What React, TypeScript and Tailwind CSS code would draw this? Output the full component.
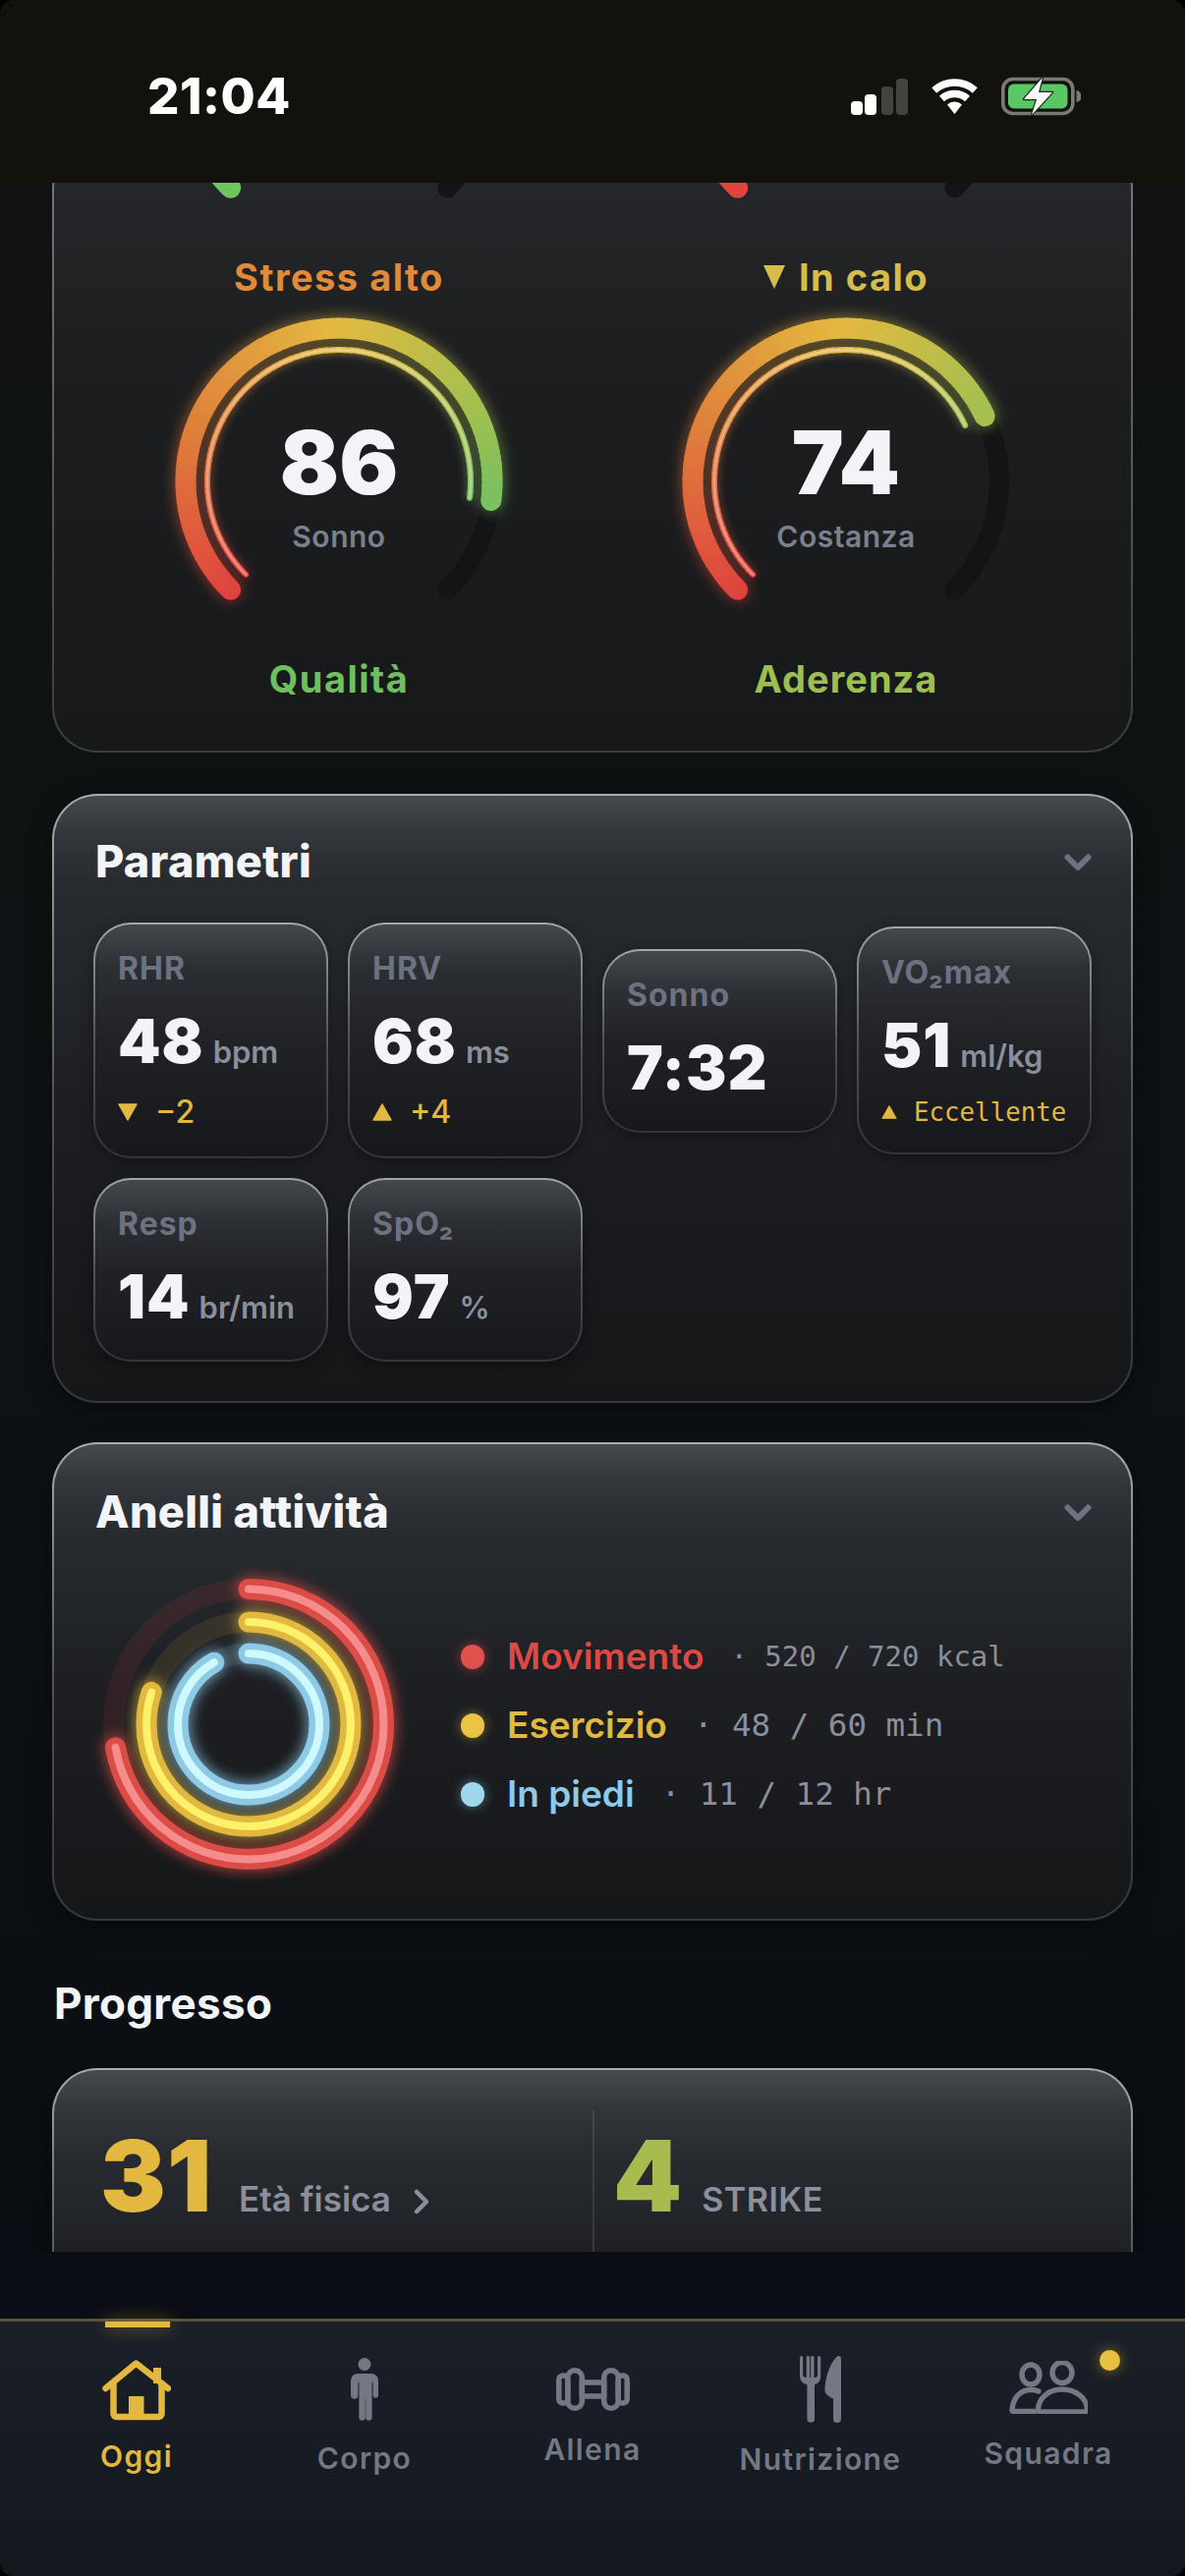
import type { ReactNode } from 'react';

const SANS = "font-['Inter','Noto_Sans',sans-serif]";
const MONO = "font-['DejaVu_Sans_Mono','Liberation_Mono',monospace]";

// colour along the gauge, position 0..1 of the full 270 degree sweep
const GAUGE_STOPS: [number, number[]][] = [
    [0, [224, 66, 62]],
    [0.25, [223, 128, 59]],
    [0.5, [227, 185, 64]],
    [0.74, [162, 192, 80]],
    [0.86, [122, 192, 96]],
    [1, [110, 190, 100]],
];

function gaugeColor(t: number, lighten = 0) {
    for (let i = 1; i < GAUGE_STOPS.length; i++) {
        const [p0, c0] = GAUGE_STOPS[i - 1];
        const [p1, c1] = GAUGE_STOPS[i];
        if (t <= p1) {
            const k = (t - p0) / (p1 - p0);
            const mix = c0.map((v, j) => v + (c1[j] - v) * k).map((v) => Math.round(v + (255 - v) * lighten));
            return `rgb(${mix.join(',')})`;
        }
    }
    return 'rgb(110,190,100)';
}

function polar(cx: number, cy: number, r: number, deg: number) {
    const a = ((deg - 90) * Math.PI) / 180;
    return [cx + r * Math.cos(a), cy + r * Math.sin(a)];
}

function arc(cx: number, cy: number, r: number, from: number, to: number) {
    const [x0, y0] = polar(cx, cy, r, from);
    const [x1, y1] = polar(cx, cy, r, to);
    return `M${x0} ${y0}A${r} ${r} 0 ${to - from > 180 ? 1 : 0} 1 ${x1} ${y1}`;
}

function GradientArc({ cx, cy, r, value, width, lighten = 0 }: { cx: number; cy: number; r: number; value: number; width: number; lighten?: number }) {
    const n = Math.round(value * 100);
    return (
        <>
            {Array.from({ length: n }, (_, i) => {
                const from = -135 + (270 * value * i) / n;
                const to = -135 + (270 * value * (i + 1)) / n;
                return <path key={i} d={arc(cx, cy, r, from, to)} fill="none" stroke={gaugeColor((i / n) * value, lighten)} strokeWidth={width} strokeLinecap="round" />;
            })}
        </>
    );
}

function Gauge({ value, title, caption }: { value: number; title: string; caption: string }) {
    const t = value / 100;
    return (
        <div className="relative w-full">
            <svg width="516" height="320" viewBox="0 0 516 320" className="block overflow-visible">
                <path d={arc(258, 186, 156, -135, 135)} fill="none" stroke="#131415" strokeWidth="20" strokeLinecap="round" />
                <g className="blur-[7px] opacity-50">
                    <GradientArc cx={258} cy={186} r={156} value={t} width={24} />
                </g>
                <g className="blur-[5px] opacity-60">
                    <GradientArc cx={258} cy={186} r={134} value={t} width={6} />
                </g>
                <GradientArc cx={258} cy={186} r={156} value={t} width={21} />
                <GradientArc cx={258} cy={186} r={134} value={t} width={6} />
                <GradientArc cx={258} cy={186} r={134} value={t} width={3} lighten={0.35} />
            </svg>
            <div className="absolute left-0 right-0 top-[122px] flex flex-col items-center">
                <span className="text-[89px] leading-[90px] font-black text-[#f2f4f7]">{title}</span>
                <span className="mt-[15px] text-[30px] leading-[30px] font-semibold tracking-[0.5px] text-[#7b808e]">{caption}</span>
            </div>
        </div>
    );
}

// ends of the gauges scrolled up under the status bar
function GaugeTail({ color }: { color: string }) {
    return (
        <svg width="516" height="58" viewBox="0 0 516 58" className="block">
            <path d={arc(258, -67, 156, -135, -118)} fill="none" stroke={color} strokeWidth="21" strokeLinecap="round" />
            <path d={arc(258, -67, 156, 118, 135)} fill="none" stroke="#131415" strokeWidth="20" strokeLinecap="round" />
        </svg>
    );
}

function Card({ children, className = '' }: { children: ReactNode; className?: string }) {
    return (
        <div className={`rounded-[46px] bg-gradient-to-b from-[#a9acaf] via-[#505356] to-[#35383a] p-[2px] shadow-[0_6px_24px_rgba(0,0,0,0.45)] ${className}`}>
            <div className="h-full rounded-[44px] bg-[linear-gradient(180deg,#46494d_0px,#33363b_36px,#272b30_90px,#1d1f23_50%,#141618_100%)]">{children}</div>
        </div>
    );
}

function CardHeader({ title }: { title: string }) {
    return (
        <div className="flex h-[52px] items-center justify-between pl-[42px] pr-[40px]">
            <h2 className="text-[45px] leading-[52px] font-extrabold tracking-[0.3px] text-[#f2f4f7]">{title}</h2>
            <svg width="28" height="19" viewBox="0 0 28 19" fill="none" stroke="#6b7280" strokeWidth="6" strokeLinecap="round" strokeLinejoin="round">
                <path d="M3.500 4.500 14 15 24.500 4.500" />
            </svg>
        </div>
    );
}

function Triangle({ down, size = 20 }: { down?: boolean; size?: number }) {
    return (
        <svg width={size} height={size - 2} viewBox="0 0 20 18" className="shrink-0" fill="#e2b83f" stroke="#e2b83f" strokeWidth="1.5" strokeLinejoin="round">
            <path d={down ? 'M1 1h18L10 17z' : 'M10 1 19 17H1z'} />
        </svg>
    );
}

type Metric = {
    label: string;
    value: string;
    unit?: string;
    delta?: string;
    down?: boolean;
    note?: string;
};

function MetricCard({ label, value, unit, delta, down, note }: Metric) {
    return (
        <div className="rounded-[38px] bg-gradient-to-b from-[#a3a6a9] via-[#505356] to-[#323538] p-[2px] shadow-[0_4px_14px_rgba(0,0,0,0.35)]">
            <div className="rounded-[36px] bg-[linear-gradient(180deg,#44474b_0px,#2b2e33_44px,#202226_50%,#17181b_100%)] pl-[23px] pt-[27px] pb-[32px]">
                <div className="h-[36px] text-[32px] leading-[36px] font-bold tracking-[1px] text-[#6d7280]">{label}</div>
                <div className="mt-[24px] flex h-[64px] items-baseline gap-[9px]">
                    <span className="text-[62px] leading-[64px] font-black tracking-[1px] text-[#f2f4f7]">{value}</span>
                    {unit && <span className="text-[31px] leading-[30px] font-semibold text-[#8a8f9c]">{unit}</span>}
                </div>
                {delta && (
                    <div className="mt-[27px] flex h-[26px] items-center gap-[18px] text-[32px] leading-[26px] font-medium text-[#e2b83f]">
                        <Triangle down={down} />
                        <span>{delta}</span>
                    </div>
                )}
                {note && (
                    <div className={`mt-[27px] flex h-[18px] items-center gap-[17px] text-[25.8px] leading-[18px] text-[#e2b83f] ${MONO}`}>
                        <Triangle size={16} />
                        <span>{note}</span>
                    </div>
                )}
            </div>
        </div>
    );
}

function Rings() {
    const rings = [
        { r: 137.5, pct: 0.722, base: '#dc4c47', core: '#f48d8b', track: '#e0423f' },
        { r: 104, pct: 0.8, base: '#e2b83f', core: '#fff16a', track: '#e2b83f' },
        { r: 72, pct: 0.917, base: '#8ecae6', core: '#cdf9ff', track: '#8ecae6' },
    ];
    return (
        <svg width="340" height="340" viewBox="0 0 340 340" className="shrink-0 overflow-visible">
            <g transform="rotate(-90 170 170)" fill="none" strokeLinecap="round">
                {rings.map((o) => {
                    const len = 2 * Math.PI * o.r;
                    const dash = `${len * o.pct} ${len}`;
                    return (
                        <g key={o.r}>
                            <circle cx="170" cy="170" r={o.r} stroke={o.track} strokeOpacity="0.11" strokeWidth="21" />
                            <circle className="blur-[7px] opacity-70" cx="170" cy="170" r={o.r} stroke={o.base} strokeWidth="25" strokeDasharray={dash} />
                            <circle cx="170" cy="170" r={o.r} stroke={o.base} strokeWidth="21" strokeDasharray={dash} />
                            <circle cx="170" cy="170" r={o.r} stroke={o.core} strokeWidth="8" strokeDasharray={dash} />
                        </g>
                    );
                })}
            </g>
        </svg>
    );
}

function LegendRow({ name, stat, dot, text, glow, statSize }: { name: string; stat: string; dot: string; text: string; glow: string; statSize: string }) {
    return (
        <div className="flex h-[70px] items-center">
            <span className={`h-[25px] w-[24px] rounded-full ${dot} ${glow}`} />
            <span className={`ml-[23px] text-[37px] leading-[44px] font-semibold ${text}`}>{name}</span>
            <span className={`ml-[27px] ${statSize} leading-[36px] whitespace-pre text-[#8b8f9b] ${MONO}`}>{`· ${stat}`}</span>
        </div>
    );
}

function HomeIcon() {
    return (
        <svg width="70" height="62" viewBox="0 0 70 62" fill="none" stroke="#e2b83f" strokeWidth="6.500" strokeLinecap="round" strokeLinejoin="round">
            <path d="M3.500 29 34.500 3.500 67 29" />
            <path d="M11.500 24v31a3 3 0 0 0 3 3h43a3 3 0 0 0 3-3V24" />
            <path d="M52 8h8v16h-8z" fill="#e2b83f" strokeWidth="0" />
            <path d="M27 37h15.500v20H27z" fill="#e2b83f" strokeWidth="0" />
        </svg>
    );
}

function BodyIcon() {
    return (
        <svg width="28" height="64" viewBox="0 0 28 64" fill="#737883">
            <circle cx="14" cy="6.500" r="6.500" />
            <path d="M7 16h14a7 7 0 0 1 7 7v15a2.700 2.700 0 0 1-5.400 0V25h-1v35.500a3.200 3.200 0 0 1-6.400 0V42h-.4v18.500a3.200 3.200 0 0 1-6.400 0V25h-1v13A2.700 2.700 0 0 1 0 38V23a7 7 0 0 1 7-7z" />
        </svg>
    );
}

function DumbbellIcon() {
    return (
        <svg width="75" height="44" viewBox="0 0 75 44" fill="none" stroke="#737883" strokeWidth="5.500" strokeLinejoin="round">
            <rect x="2.800" y="8" width="9" height="28" rx="4" />
            <rect x="11.800" y="2.800" width="14.500" height="38.400" rx="7" />
            <rect x="26.300" y="15" width="22.400" height="14" />
            <rect x="48.700" y="2.800" width="14.500" height="38.400" rx="7" />
            <rect x="63.200" y="8" width="9" height="28" rx="4" />
        </svg>
    );
}

function CutleryIcon() {
    return (
        <svg width="42" height="68" viewBox="0 0 42 68" fill="#737883">
            <path d="M1.600 0a1.600 1.600 0 0 1 1.600 1.600V19a3 3 0 0 0 3 3h.5V1.600a1.600 1.600 0 0 1 3.400 0V22h1V1.600a1.600 1.600 0 0 1 3.400 0V22h.5a3 3 0 0 0 3-3V1.600a1.600 1.600 0 0 1 3.200 0V21a8.500 8.500 0 0 1-6.200 8.200V64a3.800 3.800 0 0 1-7.600 0V29.200A8.500 8.500 0 0 1 0 21V1.600A1.600 1.600 0 0 1 1.600 0z" />
            <path d="M39.500 0A2.500 2.500 0 0 1 42 2.500V64a4 4 0 0 1-8 0V43.500c-4-2-8.500-4.500-8.500-8.500C25.500 22 31 7 37.500 1a3 3 0 0 1 2-1z" />
        </svg>
    );
}

function PeopleIcon() {
    return (
        <svg width="80" height="54" viewBox="0 0 80 54" fill="none" stroke="#737883" strokeWidth="5.400" strokeLinecap="round" strokeLinejoin="round">
            <ellipse cx="22" cy="14" rx="9" ry="10" />
            <ellipse cx="54" cy="12" rx="10" ry="10.500" />
            <path d="M30 31c-2-1-5-1.500-8-1.500-10 0-18 7.500-19 20 0 1 .5 2 2 2h21" />
            <path d="M54 29c-14 0-24 9-24.500 20.500 0 1.500 1 2.500 2.500 2.500h45c1.500 0 2.500-1 2.500-2.500C79 38 68 29 54 29z" />
        </svg>
    );
}

function SignalIcon() {
    return (
        <svg width="58" height="37" viewBox="0 0 58 37">
            <rect x="0" y="23" width="12" height="14" rx="4" fill="#fff" />
            <rect x="14" y="16" width="12" height="21" rx="4" fill="#fff" />
            <rect x="31" y="8" width="12" height="29" rx="4" fill="#42423f" />
            <rect x="46" y="0" width="12" height="37" rx="4" fill="#42423f" />
        </svg>
    );
}

function WifiIcon() {
    return (
        <svg width="51" height="38" viewBox="0 0 51 38" fill="none" stroke="#fff" strokeWidth="7.500">
            <path d={arc(25.5, 36, 31, -42, 42)} />
            <path d={arc(25.5, 36, 19.5, -42, 42)} />
            <path d="M25.500 37 18 27.500a11 11 0 0 1 15 0z" fill="#fff" stroke="none" />
        </svg>
    );
}

function BatteryIcon() {
    return (
        <svg width="81" height="40" viewBox="0 0 81 40">
            <rect x="1.800" y="2.500" width="71" height="35" rx="10" fill="none" stroke="#777a77" strokeWidth="3.600" />
            <rect x="7" y="7.500" width="60.500" height="25" rx="6" fill="#5ac764" />
            <path d="M76.500 14a5 6 0 0 1 0 12z" fill="#777a77" />
            <path d="M42 1 23 23h13l-5 16 21-23H38z" fill="#fff" stroke="#1b2a1a" strokeWidth="2.500" strokeLinejoin="round" paintOrder="stroke" />
        </svg>
    );
}

const NAV = [
    { label: 'Oggi', icon: <HomeIcon />, box: 'mt-[39px]', gap: 'mt-[18px]', active: true },
    { label: 'Corpo', icon: <BodyIcon />, box: 'mt-[37px]', gap: 'mt-[20px]' },
    { label: 'Allena', icon: <DumbbellIcon />, box: 'mt-[47px]', gap: 'mt-[21px]' },
    { label: 'Nutrizione', icon: <CutleryIcon />, box: 'mt-[35px]', gap: 'mt-[19px]' },
    { label: 'Squadra', icon: <PeopleIcon />, box: 'mt-[40px]', gap: 'mt-[22px]', dot: true },
];

const METRICS: Metric[] = [
    { label: 'RHR', value: '48', unit: 'bpm', delta: '−2', down: true },
    { label: 'HRV', value: '68', unit: 'ms', delta: '+4' },
    { label: 'Sonno', value: '7:32' },
    { label: 'VO₂max', value: '51', unit: 'ml/kg', note: 'Eccellente' },
    { label: 'Resp', value: '14', unit: 'br/min' },
    { label: 'SpO₂', value: '97', unit: '%' },
];

export default function App() {
    return (
        <div className="h-[2622px] w-[1206px] bg-black">
            <div className={`flex h-full w-full flex-col overflow-hidden rounded-[14px] bg-gradient-to-b from-[#101211] via-[#0e1215] to-[#090d14] ${SANS}`}>
                {/* status bar */}
                <div className="relative z-10 flex h-[186px] shrink-0 items-center justify-between bg-[#12110c] pl-[150px] pr-[106px] pt-[10px]">
                    <span className="text-[51px] leading-[60px] font-extrabold tracking-[0.5px] text-white">21:04</span>
                    <div className="flex items-center gap-[22px]">
                        <SignalIcon />
                        <WifiIcon />
                        <BatteryIcon />
                    </div>
                </div>

                <main className="h-[2106px] shrink-0 overflow-hidden px-[53px]">
                    {/* recupero */}
                    <div className="-mt-[40px] rounded-[46px] bg-gradient-to-b from-[#77797b] to-[#3a3d3f] p-[2px]">
                        <div className="rounded-[44px] bg-[linear-gradient(180deg,#26292c_0px,#1d1e20_35%,#16181a_100%)] px-[32px] pb-[51px]">
                            <div className="grid grid-cols-2">
                                <GaugeTail color="#6fc460" />
                                <GaugeTail color="#e0443f" />
                            </div>
                            <div className="mt-[54px] grid grid-cols-2">
                                <div className="flex flex-col items-center">
                                    <div className="flex h-[44px] items-center text-[38px] font-bold tracking-[1.5px] text-[#e08a3a]">Stress alto</div>
                                    <Gauge value={86} title="86" caption="Sonno" />
                                    <div className="mt-[45px] h-[44px] text-[38px] leading-[44px] font-bold tracking-[1.5px] text-[#6fbf5f]">Qualità</div>
                                </div>
                                <div className="flex flex-col items-center">
                                    <div className="flex h-[44px] items-center gap-[14px] text-[38px] font-bold tracking-[1.5px] text-[#d5bd4a]">
                                        <svg width="22" height="24" viewBox="0 0 22 24" fill="#d5bd4a">
                                            <path d="M0 0h22L11 24z" />
                                        </svg>
                                        In calo
                                    </div>
                                    <Gauge value={74} title="74" caption="Costanza" />
                                    <div className="mt-[45px] h-[44px] text-[38px] leading-[44px] font-bold tracking-[1px] text-[#9dbf52]">Aderenza</div>
                                </div>
                            </div>
                        </div>
                    </div>

                    <Card className="mt-[42px]">
                        <div className="pt-[41px] pb-[40px]">
                            <CardHeader title="Parametri" />
                            <div className="mt-[36px] grid grid-cols-4 items-center gap-x-[20px] gap-y-[20px] px-[40px]">
                                {METRICS.map((m) => (
                                    <MetricCard key={m.label} {...m} />
                                ))}
                            </div>
                        </div>
                    </Card>

                    <Card className="mt-[40px]">
                        <div className="pt-[43px] pb-[28px]">
                            <CardHeader title="Anelli attività" />
                            <div className="mt-[20px] flex items-center pl-[28px]">
                                <Rings />
                                <div className="ml-[46px] mt-[2px] flex flex-col">
                                    <LegendRow name="Movimento" stat="520 / 720 kcal" statSize="text-[29px]" dot="bg-[#e0504c]" text="text-[#dd4a45]" glow="shadow-[0_0_12px_rgba(224,70,66,0.6)]" />
                                    <LegendRow name="Esercizio" stat="48 / 60 min" statSize="text-[32.5px]" dot="bg-[#e9c445]" text="text-[#e2b83f]" glow="shadow-[0_0_12px_rgba(226,184,63,0.5)]" />
                                    <LegendRow name="In piedi" stat="11 / 12 hr" statSize="text-[32.5px]" dot="bg-[#9fd8ee]" text="text-[#8ecae6]" glow="shadow-[0_0_12px_rgba(142,202,230,0.5)]" />
                                </div>
                            </div>
                        </div>
                    </Card>

                    <h2 className="mt-[59px] pl-[2px] text-[44px] leading-[50px] font-bold tracking-[0.3px] text-[#f2f4f7]">Progresso</h2>

                    <Card className="mt-[41px] h-[400px]">
                        <div className="grid grid-cols-2 pt-[41px]">
                            <div className="flex h-[120px] items-baseline pl-[47px] pt-[17px]">
                                <span className="text-[100px] leading-[100px] font-black tracking-[1px] text-[#e2b83f]">31</span>
                                <span className="ml-[27px] text-[35px] font-semibold text-[#8a8f9b]">Età fisica</span>
                                <svg width="18" height="26" viewBox="0 0 18 26" fill="none" stroke="#8a8f9b" strokeWidth="4.500" strokeLinecap="round" strokeLinejoin="round" className="ml-[22px] translate-y-[3px]">
                                    <path d="M4 3l10 10L4 23" />
                                </svg>
                            </div>
                            <div className="flex h-[400px] items-baseline border-l-2 border-white/10 pl-[19px] pt-[17px]">
                                <span className="text-[100px] leading-[100px] font-black text-[#a8bb4e]">4</span>
                                <span className="ml-[20px] text-[34px] font-semibold tracking-[0.5px] text-[#8a8f9b]">STRIKE</span>
                            </div>
                        </div>
                    </Card>
                </main>

                <div className="h-[68px] shrink-0 bg-[#0a0d14]" />

                {/* tab bar */}
                <nav className="grid flex-1 grid-cols-5 border-t-[3px] border-[#5a5232] bg-gradient-to-b from-[#1b1f27] to-[#13171e] px-[23px]">
                    {NAV.map((item) => (
                        <div key={item.label} className="relative flex flex-col items-center">
                            {item.active && <span className="absolute left-[84px] top-0 h-[6px] w-[66px] bg-[#e2b83f] shadow-[0_0_18px_rgba(226,184,63,0.55)]" />}
                            {item.dot && <span className="absolute left-[168px] top-[29px] h-[21px] w-[21px] rounded-full bg-[#e9bf3f] shadow-[0_0_14px_rgba(233,191,63,0.5)]" />}
                            <div className={item.box}>{item.icon}</div>
                            <span className={`${item.gap} text-[30px] leading-[36px] font-semibold tracking-[1.4px] ${item.active ? 'text-[#e2b83f]' : 'text-[#737883]'}`}>{item.label}</span>
                        </div>
                    ))}
                </nav>
            </div>
        </div>
    );
}
